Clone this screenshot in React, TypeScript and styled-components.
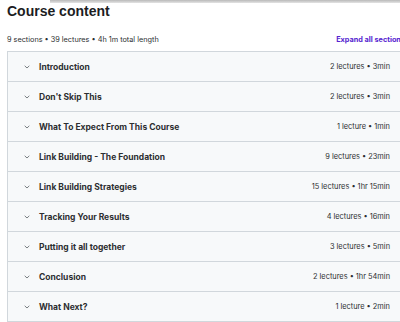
import styled, { createGlobalStyle } from "styled-components";

type Section = {
  title: string;
  meta: string;
};

const SECTIONS: Section[] = [
  { title: "Introduction", meta: "2 lectures • 3min" },
  { title: "Don't Skip This", meta: "2 lectures • 3min" },
  { title: "What To Expect From This Course", meta: "1 lecture • 1min" },
  { title: "Link Building - The Foundation", meta: "9 lectures • 23min" },
  { title: "Link Building Strategies", meta: "15 lectures • 1hr 15min" },
  { title: "Tracking Your Results", meta: "4 lectures • 16min" },
  { title: "Putting it all together", meta: "3 lectures • 5min" },
  { title: "Conclusion", meta: "2 lectures • 1hr 54min" },
  { title: "What Next?", meta: "1 lecture • 2min" },
];

const GlobalStyle = createGlobalStyle`
  html, body {
    margin: 0;
    padding: 0;
    background: #ffffff;
    overflow: hidden;
  }
  body {
    font-family: Inter, "Liberation Sans", sans-serif;
    color: #2d2f31;
  }
`;

const Chevron = () => (
  <svg width="6" height="4" viewBox="0 0 6 4" fill="none">
    <path d="M0.7 0.8 L3 3 L5.3 0.8" stroke="#6a6f73" strokeWidth="0.9" />
  </svg>
);

export default function App() {
  return (
    <>
      <GlobalStyle />
      <Page>
        <TopShadow />
        <Title>Course content</Title>
        <Summary>
          <Stats>9 sections • 39 lectures • 4h 1m total length</Stats>
          <ExpandAll>Expand all sections</ExpandAll>
        </Summary>
        <List>
          {SECTIONS.map((s) => (
            <Row key={s.title}>
              <RowLeft>
                <Chevron />
                <RowTitle>{s.title}</RowTitle>
              </RowLeft>
              <RowMeta>{s.meta}</RowMeta>
            </Row>
          ))}
        </List>
      </Page>
    </>
  );
}

const Page = styled.div`
  width: 398px;
  padding-left: 7px;
  display: flex;
  flex-direction: column;
`;

const TopShadow = styled.div`
  margin-left: 43px;
  height: 3px;
  background: linear-gradient(#b9b9b9, #e4e4e4);
`;

const Title = styled.h2`
  margin: 0;
  font-family: "Liberation Sans", Arial, sans-serif;
  font-size: 14px;
  line-height: 16px;
  font-weight: 700;
  color: #1c1d1f;
`;

const Summary = styled.div`
  box-sizing: border-box;
  display: flex;
  justify-content: space-between;
  align-items: center;
  height: 32px;
  padding-top: 8px;
`;

const Stats = styled.span`
  font-size: 7.3px;
  color: #2d2f31;
`;

const ExpandAll = styled.span`
  font-size: 7.3px;
  font-weight: 700;
  color: #5624d0;
`;

const List = styled.div`
  display: flex;
  flex-direction: column;
  border: 1px solid #d1d7dc;
  border-right: none;
`;

const Row = styled.div`
  display: flex;
  align-items: center;
  justify-content: space-between;
  height: 29px;
  padding: 0 15px 0 16px;
  background: #f7f9fa;
  & + & {
    border-top: 1px solid #d1d7dc;
  }
`;

const RowLeft = styled.div`
  display: flex;
  align-items: center;
  gap: 9px;
`;

const RowTitle = styled.span`
  font-size: 8.5px;
  font-weight: 700;
  color: #2d2f31;
`;

const RowMeta = styled.span`
  font-size: 7.4px;
  color: #2d2f31;
`;
